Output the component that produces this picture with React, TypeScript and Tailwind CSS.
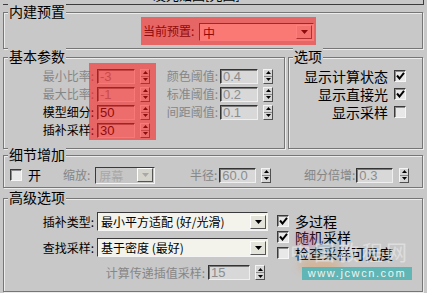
import React from "react";

function Group({
  title,
  className,
  children,
}: {
  title: string;
  className: string;
  children?: React.ReactNode;
}) {
  return (
    <div
      className={`relative border border-[#767676] shadow-[1px_1px_0_#ececec,inset_1px_1px_0_#ececec] ${className}`}
    >
      <span className="absolute left-[4px] top-[-10px] bg-[#c8c8c8] px-[1px] text-[14px] leading-[16px] text-black">
        {title}
      </span>
      {children}
    </div>
  );
}

function Spinner() {
  return (
    <div className="flex h-[15px] w-[10px] flex-col border border-t-[#f4f4f4] border-l-[#f4f4f4] border-b-[#505050] border-r-[#505050] bg-[#d6d6d6]">
      <div className="flex flex-1 items-center justify-center border-b border-[#8a8a8a]">
        <svg width="5" height="3" viewBox="0 0 5 3">
          <path d="M2.5 0L5 3H0z" fill="#000" />
        </svg>
      </div>
      <div className="flex flex-1 items-center justify-center">
        <svg width="5" height="3" viewBox="0 0 5 3">
          <path d="M0 0h5L2.5 3z" fill="#000" />
        </svg>
      </div>
    </div>
  );
}

function Field({ v, w, dim }: { v: string; w: string; dim?: boolean }) {
  return (
    <div
      className={`${w} h-[15px] overflow-hidden border border-t-[#333] border-l-[#333] border-b-[#efefef] border-r-[#efefef] bg-[#d8d8d8] pl-[2px] font-['Liberation_Sans',sans-serif] text-[13px] leading-[13px] shadow-[inset_1px_1px_0_#7a7a7a] ${
        dim ? "text-[#8c8c8c]" : "text-black"
      }`}
    >
      {v}
    </div>
  );
}

function Check({ on }: { on?: boolean }) {
  return (
    <div className="flex h-[12px] w-[12px] shrink-0 items-center justify-center border border-t-[#3a3a3a] border-l-[#3a3a3a] border-b-[#f6f6f6] border-r-[#f6f6f6] bg-[#e8e8e8] shadow-[inset_1px_1px_0_#8c8c8c]">
      {on && (
        <svg width="9" height="8" viewBox="0 0 9 8">
          <path d="M1 3.5l2.5 3L8 0.8" stroke="#000" strokeWidth="2" fill="none" />
        </svg>
      )}
    </div>
  );
}

function Drop({
  text,
  w,
  h,
  dim,
}: {
  text: string;
  w: string;
  h: string;
  dim?: boolean;
}) {
  return (
    <div
      className={`flex items-center ${w} ${h} border border-t-[#3a3a3a] border-l-[#3a3a3a] border-b-[#f4f4f4] border-r-[#f4f4f4] ${
        dim ? "bg-[#c6c6c6] text-[#a8a8a8]" : "bg-[#f3f3ec] text-black"
      }`}
    >
      <span className="flex-1 overflow-hidden whitespace-nowrap pl-[3px] text-[12px] leading-[15px]">
        {text}
      </span>
      <div
        className={`mr-[1px] flex h-[14px] w-[16px] items-center justify-center border border-t-[#fff] border-l-[#fff] border-b-[#555] border-r-[#555] ${
          dim ? "bg-[#d4d4cc]" : "bg-[#e4e4da]"
        }`}
      >
        <svg width="7" height="4" viewBox="0 0 7 4">
          <path d="M0 0h7L3.5 4z" fill={dim ? "#a8a8a8" : "#000"} />
        </svg>
      </div>
    </div>
  );
}

const dim = "text-[#868686]";

function ParamRow({
  l1,
  v1,
  d1,
  l2,
  v2,
}: {
  l1: string;
  v1: string;
  d1?: boolean;
  l2?: string;
  v2?: string;
}) {
  return (
    <div className="flex h-[18px] items-center text-[12px]">
      <span className={`w-[90px] text-right ${d1 ? dim : "text-black"}`}>{l1}</span>
      <div className="ml-[3px]">
        <Field v={v1} w="w-[38px]" dim={d1} />
      </div>
      <div className="ml-[5px]">
        <Spinner />
      </div>
      {l2 && (
        <>
          <span className={`w-[68px] text-right ${dim}`}>{l2}</span>
          <div className="ml-[2px]">
            <Field v={v2 ?? ""} w="w-[38px]" dim />
          </div>
          <div className="ml-[5px]">
            <Spinner />
          </div>
        </>
      )}
    </div>
  );
}

function OptRow({ label, on }: { label: string; on?: boolean }) {
  return (
    <div className="flex h-[18px] items-center justify-end gap-[6px] pr-[16px] text-[14px]">
      <span>{label}</span>
      <Check on={on} />
    </div>
  );
}

export default function App() {
  return (
    <div className="relative h-[293px] w-[427px] overflow-hidden bg-[#c8c8c8] font-['Noto_Sans_CJK_SC',sans-serif] text-[12px] leading-[14px] text-black">
      {/* rollout title, cut off at the top */}
      <div className="mx-[3px] h-[5px] overflow-hidden border-b border-r border-[#3c3c3c]">
        <div className="ml-[150px] mt-[-12px] text-[13px] leading-[14px]">发光贴图[光图]</div>
      </div>

      <Group title="内建预置" className="ml-[3px] mt-[7px] h-[37px] w-[420px]">
        <div className="relative ml-[137px] mt-[4px] flex h-[28px] w-[175px] items-start pl-[2px]">
          <span className="mt-[7px] w-[54px] text-[12px]">当前预置:</span>
          <div className="ml-[2px] mt-[6px]">
            <Drop text="中" w="w-[115px]" h="h-[18px]" />
          </div>
          <div className="pointer-events-none absolute inset-0 bg-[rgba(255,20,20,0.55)]" />
        </div>
      </Group>

      <div className="ml-[3px] mt-[8px] flex gap-[3px]">
        <Group title="基本参数" className="h-[92px] w-[282px]">
          <div className="pt-[9px]">
            <ParamRow l1="最小比率:" v1="-3" d1 l2="颜色阈值:" v2="0.4" />
            <ParamRow l1="最大比率:" v1="-1" d1 l2="标准阈值:" v2="0.2" />
            <ParamRow l1="模型细分:" v1="50" l2="间距阈值:" v2="0.1" />
            <ParamRow l1="插补采样:" v1="30" />
          </div>
          <div className="pointer-events-none absolute left-[85px] top-[5px] h-[77px] w-[67px] bg-[rgba(255,20,20,0.55)]" />
        </Group>
        <Group title="选项" className="h-[92px] w-[135px]">
          <div className="pt-[9px]">
            <OptRow label="显示计算状态" on />
            <OptRow label="显示直接光" on />
            <OptRow label="显示采样" />
          </div>
        </Group>
      </div>

      <Group title="细节增加" className="ml-[3px] mt-[6px] h-[33px] w-[420px]">
        <div className="mt-[10px] flex h-[18px] items-center">
          <div className="ml-[6px]">
            <Check />
          </div>
          <span className="ml-[6px] text-[13px]">开</span>
          <span className={`ml-[22px] ${dim}`}>缩放:</span>
          <div className="ml-[5px]">
            <Drop text="屏幕" w="w-[60px]" h="h-[17px]" dim />
          </div>
          <span className={`w-[62px] text-right ${dim}`}>半径:</span>
          <div className="ml-[2px]">
            <Field v="60.0" w="w-[37px]" dim />
          </div>
          <div className="ml-[5px]">
            <Spinner />
          </div>
          <span className={`w-[84px] text-right ${dim}`}>细分倍增:</span>
          <div className="ml-[1px]">
            <Field v="0.3" w="w-[37px]" dim />
          </div>
          <div className="ml-[6px]">
            <Spinner />
          </div>
        </div>
      </Group>

      <Group title="高级选项" className="ml-[3px] mt-[10px] h-[94px] w-[420px]">
        <div className="flex">
          <div className="w-[264px] pt-[13px]">
            <div className="flex h-[19px] items-center">
              <span className="w-[90px] text-right">插补类型:</span>
              <div className="ml-[3px]">
                <Drop text="最小平方适配 (好/光滑)" w="w-[171px]" h="h-[19px]" />
              </div>
            </div>
            <div className="mt-[7px] flex h-[19px] items-center">
              <span className="w-[90px] text-right">查找采样:</span>
              <div className="ml-[3px]">
                <Drop text="基于密度 (最好)" w="w-[171px]" h="h-[19px]" />
              </div>
            </div>
            <div className="mt-[8px] flex h-[15px] items-center">
              <span className={`w-[201px] text-right ${dim}`}>计算传递插值采样:</span>
              <div className="ml-[3px]">
                <Field v="15" w="w-[42px]" dim />
              </div>
              <div className="ml-[5px]">
                <Spinner />
              </div>
            </div>
          </div>
          <div className="ml-[9px] pt-[14px] text-[14px]">
            <div className="flex h-[16px] items-center gap-[6px]">
              <Check on />
              <span>多过程</span>
            </div>
            <div className="flex h-[16px] items-center gap-[6px]">
              <Check on />
              <span>随机采样</span>
            </div>
            <div className="flex h-[16px] items-center gap-[6px]">
              <Check />
              <span>检查采样可见度</span>
            </div>
          </div>
        </div>
      </Group>

      {/* watermark */}
      <svg
        className="pointer-events-none absolute left-[285px] top-[228px]"
        width="130"
        height="50"
        viewBox="0 0 130 50"
      >
        <defs>
          <filter id="b" x="-50%" y="-50%" width="200%" height="200%">
            <feGaussianBlur stdDeviation="4" />
          </filter>
        </defs>
        <ellipse cx="22" cy="12" rx="10" ry="7" fill="#d05a9a" opacity="0.45" filter="url(#b)" />
        <ellipse cx="40" cy="22" rx="12" ry="6" fill="#5aa0d0" opacity="0.35" filter="url(#b)" />
        <ellipse cx="35" cy="38" rx="22" ry="7" fill="#e09a5a" opacity="0.45" filter="url(#b)" />
      </svg>
      <div className="pointer-events-none absolute left-[290px] top-[240px] text-[21px] leading-[22px] tracking-[3px] text-[#ececec]/60">
        中国教程网
      </div>
      <div className="pointer-events-none absolute left-[302px] top-[267px] h-[13px] w-[110px] bg-[#5fb6b4] text-center font-['Liberation_Sans',sans-serif] text-[11px] leading-[13px] tracking-[1.6px] text-[#f2f2f2]">
        www.jcwcn.com
      </div>
    </div>
  );
}
